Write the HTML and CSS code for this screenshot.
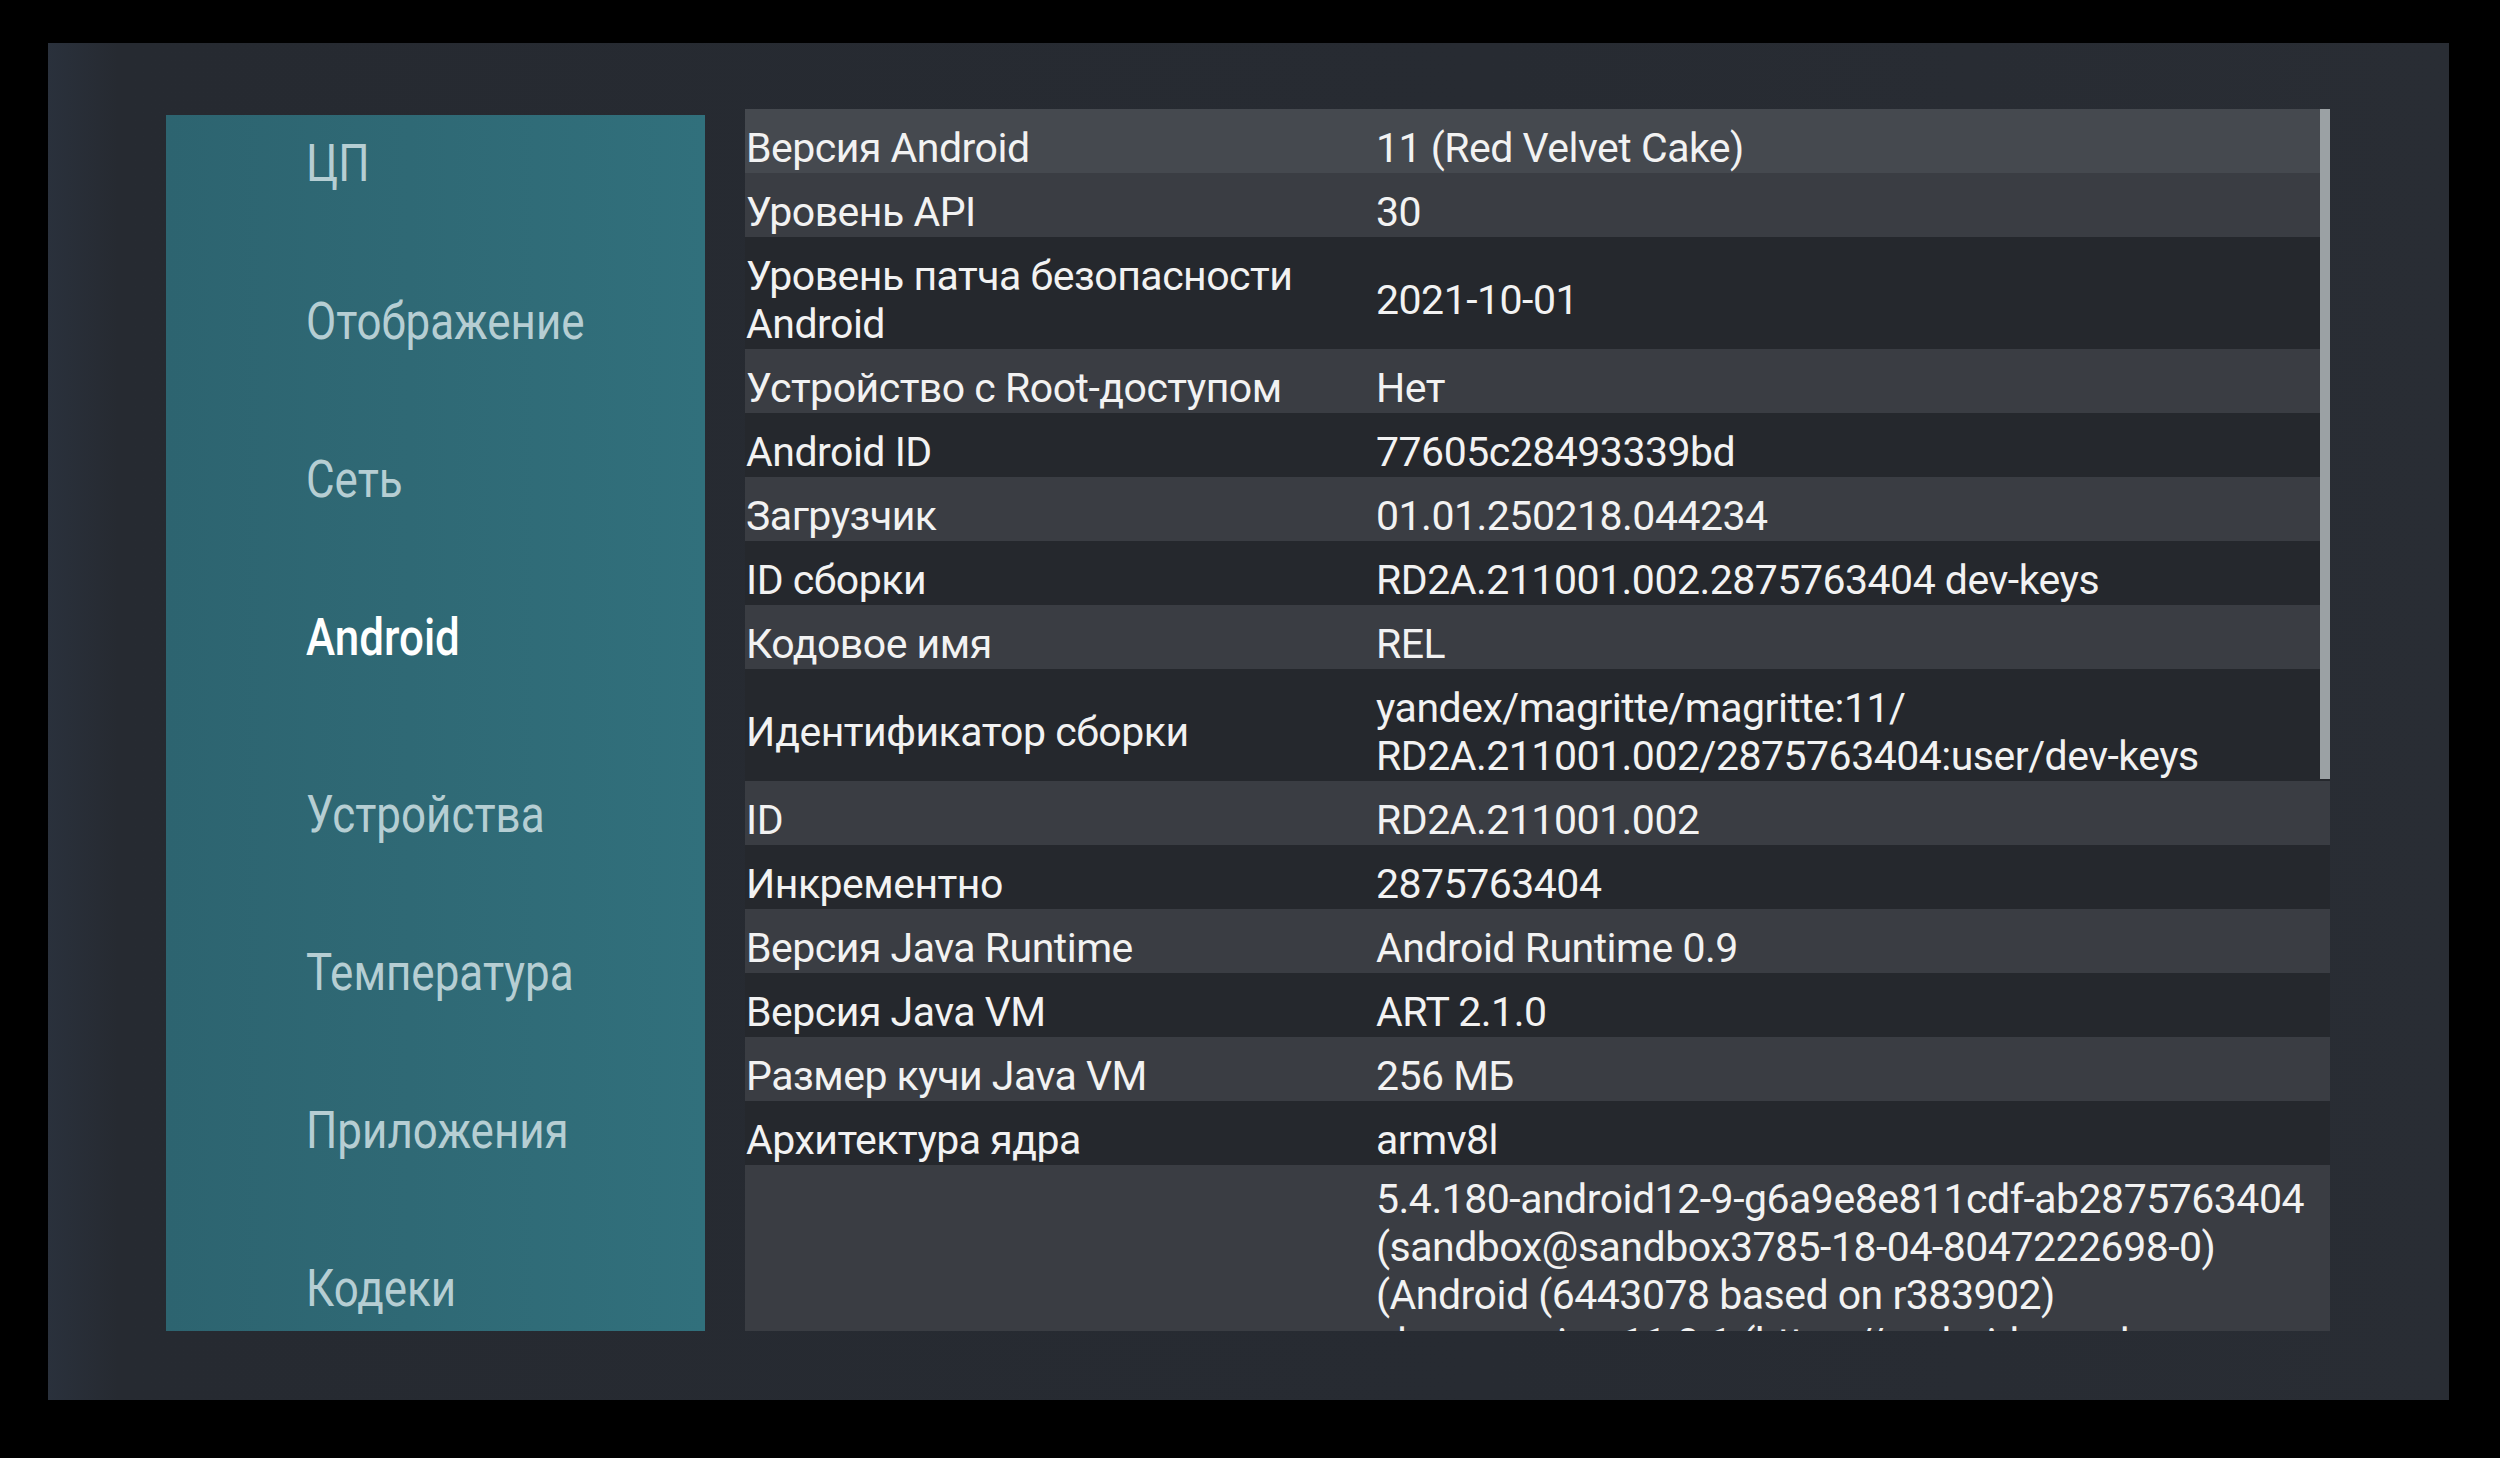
FILE: index.html
```html
<!DOCTYPE html>
<html lang="ru">
<head>
<meta charset="utf-8">
<title>Android</title>
<link rel="stylesheet" href="styles.css">
</head>
<body>
<div class="screen">
  <nav class="sidebar">
    <div class="item"><span class="label">ЦП</span></div>
    <div class="item"><span class="label">Отображение</span></div>
    <div class="item"><span class="label">Сеть</span></div>
    <div class="item selected"><span class="label">Android</span></div>
    <div class="item"><span class="label">Устройства</span></div>
    <div class="item"><span class="label">Температура</span></div>
    <div class="item"><span class="label">Приложения</span></div>
    <div class="item"><span class="label">Кодеки</span></div>
  </nav>
  <div class="table">
    <div class="rows">
      <div class="row focused"><div class="k">Версия Android</div><div class="v">11 (Red Velvet Cake)</div></div>
      <div class="row light"><div class="k">Уровень API</div><div class="v">30</div></div>
      <div class="row dark"><div class="k">Уровень патча безопасности<br>Android</div><div class="v">2021-10-01</div></div>
      <div class="row light"><div class="k">Устройство с Root-доступом</div><div class="v">Нет</div></div>
      <div class="row dark"><div class="k">Android ID</div><div class="v">77605c28493339bd</div></div>
      <div class="row light"><div class="k">Загрузчик</div><div class="v">01.01.250218.044234</div></div>
      <div class="row dark"><div class="k">ID сборки</div><div class="v">RD2A.211001.002.2875763404 dev-keys</div></div>
      <div class="row light"><div class="k">Кодовое имя</div><div class="v">REL</div></div>
      <div class="row dark"><div class="k">Идентификатор сборки</div><div class="v">yandex/magritte/magritte:11/<br>RD2A.211001.002/2875763404:user/dev-keys</div></div>
      <div class="row light"><div class="k">ID</div><div class="v">RD2A.211001.002</div></div>
      <div class="row dark"><div class="k">Инкрементно</div><div class="v">2875763404</div></div>
      <div class="row light"><div class="k">Версия Java Runtime</div><div class="v">Android Runtime 0.9</div></div>
      <div class="row dark"><div class="k">Версия Java VM</div><div class="v">ART 2.1.0</div></div>
      <div class="row light"><div class="k">Размер кучи Java VM</div><div class="v">256 МБ</div></div>
      <div class="row dark"><div class="k">Архитектура ядра</div><div class="v">armv8l</div></div>
      <div class="row light top"><div class="k"></div><div class="v">5.4.180-android12-9-g6a9e8e811cdf-ab2875763404<br>(sandbox@sandbox3785-18-04-8047222698-0)<br>(Android (6443078 based on r383902)<br>clang version 11.0.1 (https://android.googlesource.com/toolchain/llvm-project</div></div>
    </div>
    <div class="scrollbar"></div>
  </div>
</div>
</body>
</html>
```
FILE: styles.css
```css
html, body {
  margin: 0;
  padding: 0;
  background: #000;
  width: 2500px;
  height: 1458px;
  overflow: hidden;
}

.screen {
  box-sizing: border-box;
  margin: 43px 0 0 48px;
  width: 2401px;
  height: 1357px;
  background: linear-gradient(to right, #2a313c 0px, #262a31 70px, #272b32 60%, #292d34 100%);
  display: flex;
  align-items: flex-start;
  padding: 66px 0 0 118px;
  font-family: Roboto, "Noto Sans", "Liberation Sans", sans-serif;
}

.sidebar {
  box-sizing: border-box;
  margin-top: 6px;
  width: 539px;
  height: 1216px;
  background: linear-gradient(to right, #2d6470 0%, #2f6975 45%, #31707c 100%);
  padding-top: 19px;
  overflow: hidden;
  flex-shrink: 0;
}

.item {
  height: 158px;
  padding-left: 140px;
  line-height: 60px;
  font-size: 52px;
  color: #b6ced3;
}

.item .label {
  display: inline-block;
  transform: scaleX(0.845);
  transform-origin: left center;
  white-space: nowrap;
}

.item.selected {
  height: 177px;
  color: #ffffff;
  font-weight: 500;
}

.table {
  position: relative;
  margin-left: 40px;
  width: 1585px;
  height: 1222px;
  overflow: hidden;
  flex-shrink: 0;
}

.row {
  display: grid;
  grid-template-columns: 630px 1fr;
  align-items: center;
  box-sizing: border-box;
  padding: 15px 0 1px 1px;
  font-size: 41px;
  line-height: 48px;
  color: #f2f2f2;
  letter-spacing: -0.5px;
  white-space: nowrap;
}

.row.focused { background: #45494f; }
.row.light { background: #3a3d43; }
.row.dark { background: #25282d; }
.row.top { align-items: start; padding-top: 10px; }

.scrollbar {
  position: absolute;
  right: 0;
  top: 0;
  width: 10px;
  height: 670px;
  background: #9ba1a4;
}
```
